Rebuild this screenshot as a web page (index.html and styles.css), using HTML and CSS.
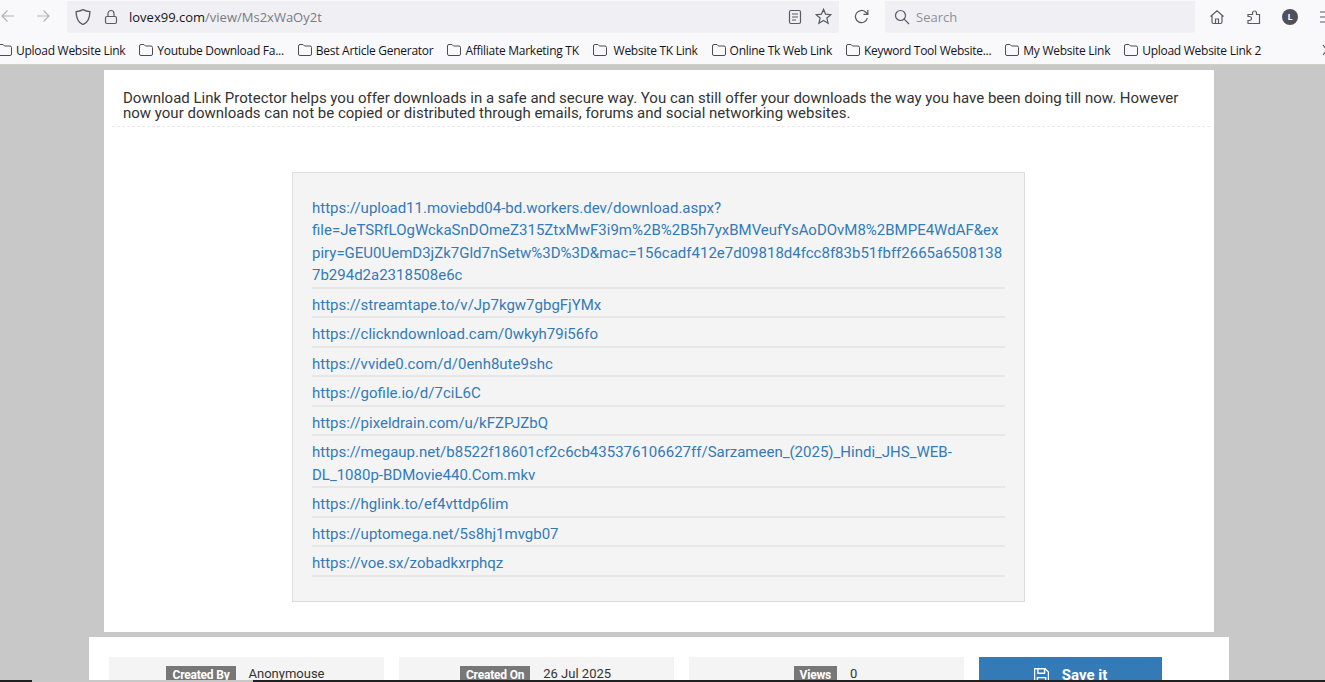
FILE: index.html
```html
<!DOCTYPE html>
<html lang="en">
<head>
  <meta charset="UTF-8">
  <meta name="viewport" content="width=device-width, initial-scale=1.0">
  <title>Download Link Protector</title>
  <link rel="stylesheet" href="styles.css">
</head>
<body>
  <header class="browser">
    <div class="toolbar">
      <div class="nav-buttons">
        <svg class="icon faded" viewBox="0 0 16 16"><path d="M14 8H2M7.500 2.500 2 8l5.500 5.500"/></svg>
        <svg class="icon faded" viewBox="0 0 16 16"><path d="M2 8h12M8.500 2.500 14 8l-5.500 5.500"/></svg>
      </div>
      <div class="url-bar">
        <svg class="icon" viewBox="1.500 1 13 14"><path d="M8 1.600c2 1.100 4 1.600 6 1.700 0 5.300-1.700 9.400-6 11.300C3.700 12.700 2 8.600 2 3.300c2-.1 4-.6 6-1.700z"/></svg>
        <svg class="icon lock" viewBox="0 0 16 16"><rect x="2.500" y="7.500" width="11" height="7" rx="1.500"/><path d="M5 7.500V4.500a3 3 0 0 1 6 0v3"/></svg>
        <span class="url"><b>lovex99.com</b>/view/Ms2xWaOy2t</span>
        <span class="url-actions">
          <svg class="icon" viewBox="0 0 16 16"><rect x="2.500" y="1.500" width="11" height="13" rx="1.500"/><path d="M5 5h6M5 8h6M5 11h4"/></svg>
          <svg class="icon star" viewBox="0 0 16 16"><path d="M8 1.300l2 4.500 4.900.5-3.700 3.200 1.100 4.800L8 11.800l-4.300 2.500 1.100-4.800L1.100 6.300 6 5.800z"/></svg>
        </span>
      </div>
      <svg class="icon reload" viewBox="0 0 16 16"><path d="M13.500 9.500A5.700 5.700 0 1 1 11.800 3.800L14 6M14 1.800V6H9.800"/></svg>
      <div class="search-bar">
        <svg class="icon" viewBox="0 0 16 16"><circle cx="6.500" cy="6.500" r="5"/><path d="M10.200 10.200 15 15"/></svg>
        <span>Search</span>
      </div>
      <div class="tool-buttons">
        <svg class="icon" viewBox="0 0 16 16"><path d="M1.500 7.500 8 1.800l6.500 5.700M3 6.500V13a1.500 1.500 0 0 0 1.500 1.500h7A1.500 1.500 0 0 0 13 13V6.500M6.500 14.500V10h3v4.500"/></svg>
        <svg class="icon" viewBox="0 0 16 16"><path d="M2 5.500H6.500V4A2 2 0 1 1 10.500 4V5.500H13.500V14.500H2V11.500H3.500A2 2 0 0 0 3.500 7.500H2Z"/></svg>
        <span class="avatar">L</span>
        <svg class="icon menu" viewBox="0 0 16 16"><path d="M1 3h14M1 8h14M1 13h14"/></svg>
      </div>
    </div>
    <nav class="bookmarks">
      <a class="bookmark first"><svg class="folder" viewBox="0 0 16 14"><path d="M1.500 3a1.500 1.500 0 0 1 1.500-1.500h3l1.500 1.500H13A1.500 1.500 0 0 1 14.500 4.500V11a1.500 1.500 0 0 1-1.500 1.500H3A1.500 1.500 0 0 1 1.500 11z"/></svg>Upload Website Link</a>
      <a class="bookmark"><svg class="folder" viewBox="0 0 16 14"><path d="M1.500 3a1.500 1.500 0 0 1 1.500-1.500h3l1.500 1.500H13A1.500 1.500 0 0 1 14.500 4.500V11a1.500 1.500 0 0 1-1.500 1.500H3A1.500 1.500 0 0 1 1.500 11z"/></svg>Youtube Download Fa...</a>
      <a class="bookmark"><svg class="folder" viewBox="0 0 16 14"><path d="M1.500 3a1.500 1.500 0 0 1 1.500-1.500h3l1.500 1.500H13A1.500 1.500 0 0 1 14.500 4.500V11a1.500 1.500 0 0 1-1.500 1.500H3A1.500 1.500 0 0 1 1.500 11z"/></svg>Best Article Generator</a>
      <a class="bookmark"><svg class="folder" viewBox="0 0 16 14"><path d="M1.500 3a1.500 1.500 0 0 1 1.500-1.500h3l1.500 1.500H13A1.500 1.500 0 0 1 14.500 4.500V11a1.500 1.500 0 0 1-1.500 1.500H3A1.500 1.500 0 0 1 1.500 11z"/></svg>Affiliate Marketing TK</a>
      <a class="bookmark"><svg class="folder" viewBox="0 0 16 14"><path d="M1.500 3a1.500 1.500 0 0 1 1.500-1.500h3l1.500 1.500H13A1.500 1.500 0 0 1 14.500 4.500V11a1.500 1.500 0 0 1-1.500 1.500H3A1.500 1.500 0 0 1 1.500 11z"/></svg>&nbsp;Website TK Link</a>
      <a class="bookmark"><svg class="folder" viewBox="0 0 16 14"><path d="M1.500 3a1.500 1.500 0 0 1 1.500-1.500h3l1.500 1.500H13A1.500 1.500 0 0 1 14.500 4.500V11a1.500 1.500 0 0 1-1.500 1.500H3A1.500 1.500 0 0 1 1.500 11z"/></svg>Online Tk Web Link</a>
      <a class="bookmark"><svg class="folder" viewBox="0 0 16 14"><path d="M1.500 3a1.500 1.500 0 0 1 1.500-1.500h3l1.500 1.500H13A1.500 1.500 0 0 1 14.500 4.500V11a1.500 1.500 0 0 1-1.500 1.500H3A1.500 1.500 0 0 1 1.500 11z"/></svg>Keyword Tool Website...</a>
      <a class="bookmark"><svg class="folder" viewBox="0 0 16 14"><path d="M1.500 3a1.500 1.500 0 0 1 1.500-1.500h3l1.500 1.500H13A1.500 1.500 0 0 1 14.500 4.500V11a1.500 1.500 0 0 1-1.500 1.500H3A1.500 1.500 0 0 1 1.500 11z"/></svg>My Website Link</a>
      <a class="bookmark"><svg class="folder" viewBox="0 0 16 14"><path d="M1.500 3a1.500 1.500 0 0 1 1.500-1.500h3l1.500 1.500H13A1.500 1.500 0 0 1 14.500 4.500V11a1.500 1.500 0 0 1-1.500 1.500H3A1.500 1.500 0 0 1 1.500 11z"/></svg>Upload Website Link 2</a>
      <svg class="more" viewBox="0 0 12 12"><path d="M1 1l4 5-4 5M6 1l4 5-4 5"/></svg>
    </nav>
  </header>

  <main class="page">
    <section class="panel">
      <p class="intro">Download Link Protector helps you offer downloads in a safe and secure way. You can still offer your downloads the way you have been doing till now. However now your downloads can not be copied or distributed through emails, forums and social networking websites.</p>
      <div class="links-box">
        <ul class="links">
          <li><a href="#">https://upload11.moviebd04-bd.workers.dev/download.aspx?<br>file=JeTSRfLOgWckaSnDOmeZ315ZtxMwF3i9m%2B%2B5h7yxBMVeufYsAoDOvM8%2BMPE4WdAF&amp;ex<br>piry=GEU0UemD3jZk7Gld7nSetw%3D%3D&amp;mac=156cadf412e7d09818d4fcc8f83b51fbff2665a6508138<br>7b294d2a2318508e6c</a></li>
          <li><a href="#">https://streamtape.to/v/Jp7kgw7gbgFjYMx</a></li>
          <li><a href="#">https://clickndownload.cam/0wkyh79i56fo</a></li>
          <li><a href="#">https://vvide0.com/d/0enh8ute9shc</a></li>
          <li><a href="#">https://gofile.io/d/7ciL6C</a></li>
          <li><a href="#">https://pixeldrain.com/u/kFZPJZbQ</a></li>
          <li><a href="#">https://megaup.net/b8522f18601cf2c6cb435376106627ff/Sarzameen_(2025)_Hindi_JHS_WEB-<br>DL_1080p-BDMovie440.Com.mkv</a></li>
          <li><a href="#">https://hglink.to/ef4vttdp6lim</a></li>
          <li><a href="#">https://uptomega.net/5s8hj1mvgb07</a></li>
          <li><a href="#">https://voe.sx/zobadkxrphqz</a></li>
        </ul>
      </div>
    </section>

    <section class="meta-panel">
      <div class="meta"><span class="label">Created By</span><span>Anonymouse</span></div>
      <div class="meta"><span class="label">Created On</span><span>26 Jul 2025</span></div>
      <div class="meta"><span class="label">Views</span><span>0</span></div>
      <a class="save-btn">
        <svg viewBox="1.500 1 13.500 14"><path d="M2 1.500h9.500l3 3V14.500H2zM5 1.500v4h6v-4M4.500 14.500V9.500h7.500v5"/></svg>
        Save it
      </a>
    </section>
  </main>

  <div class="taskbar-edge">
    <span class="edge-dark edge-left"></span>
    <span class="edge-light"></span>
    <span class="edge-dark edge-right"></span>
  </div>
</body>
</html>
```

FILE: styles.css
```css
* {
  box-sizing: border-box;
}

html,
body {
  height: 682px;
  margin: 0;
  overflow: hidden;
}

body {
  font-family: Roboto, "Liberation Sans", sans-serif;
  background-color: #c8c8c8;
  color: #333;
  position: relative;
}

/* browser chrome */

.browser {
  height: 65px;
  background-color: #f9f9fb;
  border-bottom: 1px solid #cfcfc9;
  font-family: "Open Sans", "Noto Sans", sans-serif;
}

.icon {
  width: 16px;
  height: 16px;
  fill: none;
  stroke: #5b5b66;
  stroke-width: 1.2;
  flex-shrink: 0;
}

.icon.faded {
  stroke: #b4b4b8;
}

.toolbar {
  height: 33px;
  display: flex;
  align-items: center;
}

.nav-buttons {
  width: 67px;
  flex-shrink: 0;
  display: flex;
  gap: 19px;
  margin-top: -1px;
}

.url-bar {
  width: 772px;
  height: 32px;
  flex-shrink: 0;
  background-color: #f0f0f4;
  border-radius: 0 0 4px 4px;
  display: flex;
  align-items: center;
  padding: 0 7px 0 8px;
  gap: 12px;
}

.url {
  font-size: 13px;
  color: #7a7a82;
  margin-left: -2px;
}

.url b {
  font-weight: 400;
  color: #15141a;
}

.url-actions {
  margin-left: auto;
  display: flex;
  align-items: center;
  gap: 12px;
}

.url-actions .star {
  width: 17px;
  height: 17px;
}

.reload {
  width: 17px;
  height: 17px;
  margin: 0 15px 0 14px;
}

.search-bar {
  width: 310px;
  height: 32px;
  flex-shrink: 0;
  background-color: #f0f0f4;
  border-radius: 0 0 4px 4px;
  display: flex;
  align-items: center;
  gap: 6px;
  padding-left: 9px;
  font-size: 13px;
  color: #8f8f96;
}

.tool-buttons {
  display: flex;
  align-items: center;
  gap: 21px;
  margin-left: 14px;
}

.avatar {
  width: 16px;
  height: 16px;
  flex-shrink: 0;
  border-radius: 50%;
  background-color: #50505c;
  color: #fff;
  font-size: 9px;
  font-weight: 700;
  display: flex;
  align-items: center;
  justify-content: center;
  margin-left: -1px;
}

.bookmarks {
  height: 31px;
  display: flex;
  align-items: center;
  gap: 13px;
  font-size: 12px;
  letter-spacing: -0.27px;
  color: #15141a;
  white-space: nowrap;
  padding-top: 3px;
}

.bookmark {
  display: flex;
  align-items: center;
  gap: 3px;
}

.bookmark.first {
  margin-left: -3px;
}

.folder {
  width: 16px;
  height: 14px;
  flex-shrink: 0;
  fill: none;
  stroke: #4c4c55;
  stroke-width: 1;
}

.more {
  width: 12px;
  height: 12px;
  flex-shrink: 0;
  margin: 0 -9px 0 auto;
  fill: none;
  stroke: #5b5b66;
  stroke-width: 1.2;
}

/* page content */

.page {
  padding: 5px 7px 0 0;
}

.panel {
  width: 1110px;
  height: 562px;
  margin: 0 auto;
  background-color: #fff;
  padding: 21px 4px 0 8px;
}

.intro {
  margin: 0 0 45px;
  padding: 0 20px 5px 11px;
  font-size: 15px;
  line-height: 15px;
  color: #333;
  border-bottom: 1px dashed #e8e8e8;
}

.links-box {
  width: 733px;
  height: 430px;
  margin: 0 0 0 180px;
  padding: 24px 19px 0;
  background-color: #f4f4f4;
  border: 1px solid #ddd;
}

.links {
  list-style: none;
  margin: 0;
  padding: 0;
}

.links li {
  border-bottom: 2px solid #e7e7e7;
  margin-bottom: 5.120px;
  font-size: 15px;
  line-height: 22.4px;
}

.links a {
  color: #337ab7;
  text-decoration: none;
}

.meta-panel {
  width: 1140px;
  height: 60px;
  margin: 5px auto 0;
  background-color: #fff;
  padding: 20px 20px 0;
  display: flex;
  gap: 15px;
}

.meta {
  width: 275px;
  height: 40px;
  background-color: #f4f4f4;
  display: flex;
  justify-content: center;
  align-items: flex-start;
  gap: 13px;
  padding: 9px 2px 0 0;
  font-size: 13px;
  color: #333;
}

.label {
  background-color: #777;
  color: #fff;
  font-size: 12px;
  font-weight: 700;
  letter-spacing: -0.2px;
  padding: 1px 6px;
  line-height: 16px;
}

.save-btn {
  width: 183px;
  height: 40px;
  background-color: #337ab7;
  color: #fff;
  font-size: 15px;
  font-weight: 700;
  display: flex;
  justify-content: center;
  align-items: flex-start;
  gap: 13px;
  padding-top: 9px;
}

.save-btn svg {
  width: 15px;
  height: 16px;
  margin-top: 2px;
  fill: none;
  stroke: #fff;
  stroke-width: 1.2;
}

/* dark strip along the very bottom of the capture */

.taskbar-edge {
  position: absolute;
  left: 0;
  right: 0;
  bottom: 0;
  height: 2px;
  display: flex;
}

.edge-dark {
  background-color: #202020;
}

.edge-left {
  width: 32px;
}

.edge-light {
  width: 221px;
  background-color: #c8c8c8;
}

.edge-right {
  flex: 1;
}
```
